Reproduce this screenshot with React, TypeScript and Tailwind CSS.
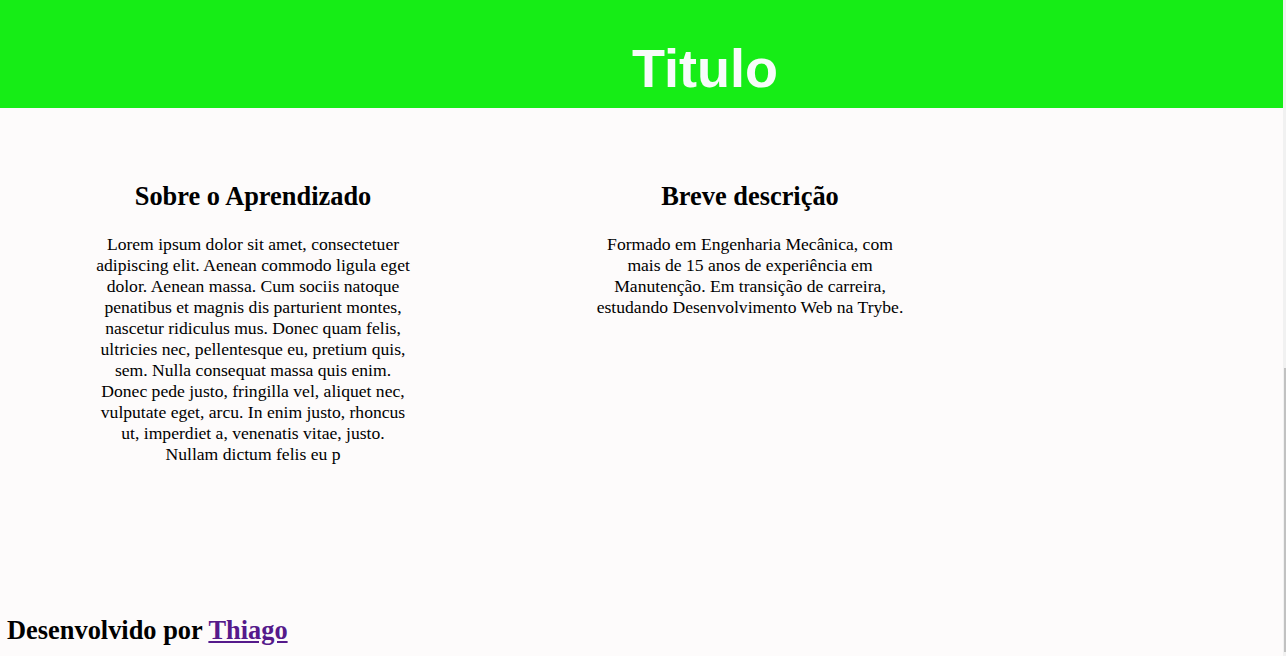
const serif = { fontFamily: '"Liberation Serif", "Times New Roman", serif' };

function Section({ title, text }: { title: string; text: string }) {
  return (
    <section className="w-[316px] text-center text-black">
      <h2 className="text-[26.4px] font-bold leading-[30px]">{title}</h2>
      <p className="mt-[23px] text-[17.6px] leading-[21px]">{text}</p>
    </section>
  );
}

const lorem =
  "Lorem ipsum dolor sit amet, consectetuer adipiscing elit. Aenean commodo ligula eget dolor. Aenean massa. Cum sociis natoque penatibus et magnis dis parturient montes, nascetur ridiculus mus. Donec quam felis, ultricies nec, pellentesque eu, pretium quis, sem. Nulla consequat massa quis enim. Donec pede justo, fringilla vel, aliquet nec, vulputate eget, arcu. In enim justo, rhoncus ut, imperdiet a, venenatis vitae, justo. Nullam dictum felis eu p";

const about =
  "Formado em Engenharia Mecânica, com mais de 15 anos de experiência em Manutenção. Em transição de carreira, estudando Desenvolvimento Web na Trybe.";

export default function App() {
  return (
    <div className="flex h-[656px] w-full overflow-hidden bg-[#fdfbfb]" style={serif}>
      <div className="flex flex-1 flex-col">
        <header className="flex h-[108px] items-start justify-center bg-[#16ed16] pl-[127px] pt-[38px]">
          <h1
            className="text-[54px] font-bold leading-[60px] text-[#f7fcf9]"
            style={{ fontFamily: '"Liberation Sans", Arial, sans-serif' }}
          >
            Titulo
          </h1>
        </header>
        <main className="flex h-[507px] gap-[181px] pl-[95px] pt-[73px]">
          <Section title="Sobre o Aprendizado" text={lorem} />
          <Section title="Breve descrição" text={about} />
        </main>
        <footer className="pl-[7px]">
          <h2 className="text-[26.4px] font-bold leading-[30px] text-black">
            Desenvolvido por{" "}
            <a href="#" className="text-[#551a8b] underline">
              Thiago
            </a>
          </h2>
        </footer>
      </div>
      <div className="flex w-[3px] flex-col bg-[#f1f1f1]">
        <div className="h-[368px]" />
        <div className="ml-[1px] h-[284px] w-[2px] bg-[#c1c1c1]" />
      </div>
    </div>
  );
}
